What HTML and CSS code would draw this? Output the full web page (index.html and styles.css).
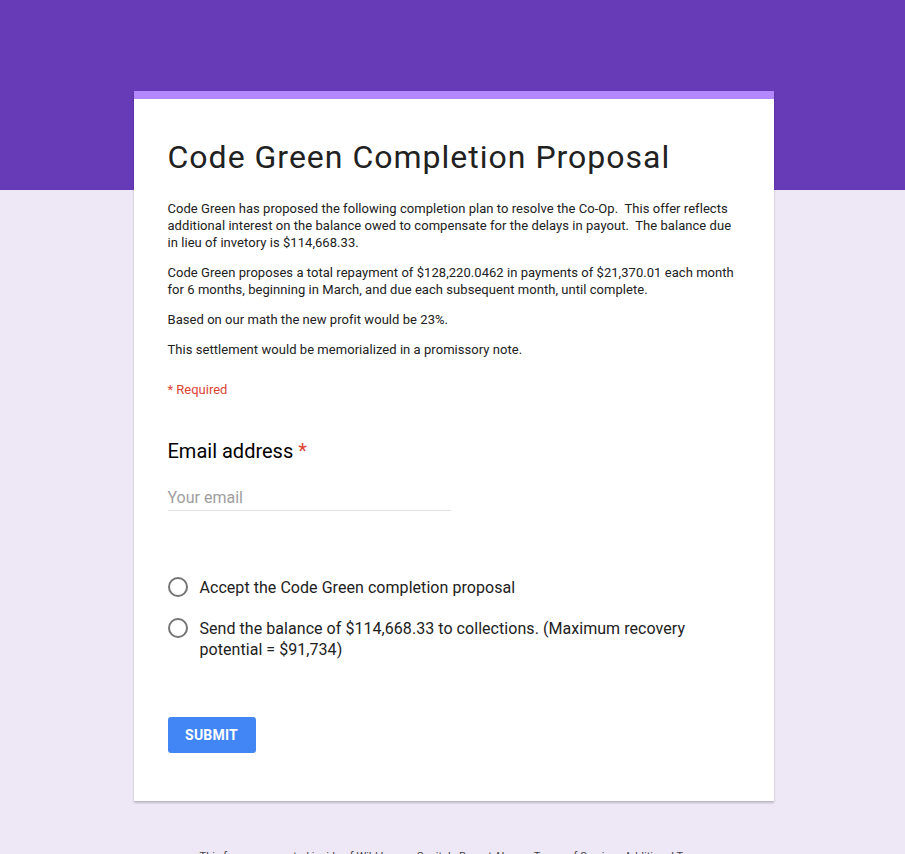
FILE: index.html
```html
<!DOCTYPE html>
<html>
<head>
<meta charset="utf-8">
<link rel="stylesheet" href="styles.css">
</head>
<body>
<div class="header-band"></div>
<main class="page">
  <div class="card">
    <div class="card-top"></div>
    <div class="card-body">
      <h1 class="title">Code Green Completion Proposal</h1>
      <div class="desc">
        <p>Code Green has proposed the following completion plan to resolve the Co-Op.&nbsp; This offer reflects additional interest on the balance owed to compensate for the delays in payout.&nbsp; The balance due in lieu of invetory is $114,668.33.</p>
        <p>Code Green proposes a total repayment of $128,220.0462 in payments of $21,370.01 each month for 6 months, beginning in March, and due each subsequent month, until complete.</p>
        <p>Based on our math the new profit would be 23%.</p>
        <p>This settlement would be memorialized in a promissory note.</p>
      </div>
      <div class="required">* Required</div>
      <div class="question">
        <div class="q-title">Email address <span class="star">*</span></div>
        <div class="input">Your email</div>
      </div>
      <div class="options">
        <label class="option"><span class="radio"></span><span class="opt-text">Accept the Code Green completion proposal</span></label>
        <label class="option"><span class="radio"></span><span class="opt-text">Send the balance of $114,668.33 to collections. (Maximum recovery potential = $91,734)</span></label>
      </div>
      <button class="submit">SUBMIT</button>
    </div>
  </div>
  <div class="footer">This form was created inside of Wild Iguana Capital.&nbsp; Report Abuse - Terms of Service - Additional Terms</div>
</main>
</body>
</html>
```

FILE: styles.css
```css
html, body {
  margin: 0;
  padding: 0;
}
body {
  background: #ede7f6;
  font-family: Roboto, "Liberation Sans", Arial, sans-serif;
  color: #212121;
  position: relative;
  overflow: hidden;
  height: 854px;
}
.header-band {
  position: absolute;
  left: 0;
  top: 0;
  width: 100%;
  height: 190px;
  background: #673ab7;
}
.page {
  position: relative;
  width: 640px;
  margin: 0 auto;
  padding-top: 91px;
  left: 1px;
}
.card {
  background: #fff;
  box-shadow: 0 2px 2px rgba(0,0,0,0.2), 0 0 1px rgba(0,0,0,0.1);
}
.card-top {
  height: 8px;
  background: #b388ff;
}
.card-body {
  padding: 34px 34px 48px 34px;
}
.title {
  margin: 0;
  font-size: 32px;
  font-weight: 400;
  line-height: 48px;
  color: #212121;
  letter-spacing: 1px;
}
.desc {
  margin-top: 19px;
  font-size: 13px;
  line-height: 17px;
  color: #212121;
  letter-spacing: 0.05px;
}
.desc p {
  margin: 0 0 13px 0;
}
.required {
  margin-top: 23px;
  font-size: 13px;
  color: #db4437;
  line-height: 17px;
}
.question {
  margin-top: 41px;
}
.q-title {
  font-size: 20px;
  line-height: 24px;
  color: #000;
}
.star {
  color: #db4437;
}
.input {
  margin-top: 24px;
  width: 283px;
  font-size: 16px;
  line-height: 22px;
  color: #9e9e9e;
  border-bottom: 1px solid #e0e0e0;
  padding-bottom: 1px;
}
.options {
  margin-top: 66px;
  display: flex;
  flex-direction: column;
  gap: 20px;
}
.option {
  display: flex;
  align-items: flex-start;
  gap: 12px;
}
.radio {
  flex: none;
  width: 16px;
  height: 16px;
  border: 2px solid #757575;
  border-radius: 50%;
}
.opt-text {
  font-size: 16px;
  line-height: 21px;
  color: #212121;
  max-width: 500px;
  letter-spacing: 0.05px;
}
.submit {
  margin-top: 57px;
  width: 88px;
  height: 36px;
  border: none;
  border-radius: 3px;
  background: #4285f4;
  color: #fff;
  font-family: Roboto, "Liberation Sans", Arial, sans-serif;
  font-weight: 700;
  font-size: 14px;
  letter-spacing: 0.2px;
  padding: 0;
}
.footer {
  margin-top: 49px;
  text-align: center;
  font-size: 11px;
  color: #444;
}
```
